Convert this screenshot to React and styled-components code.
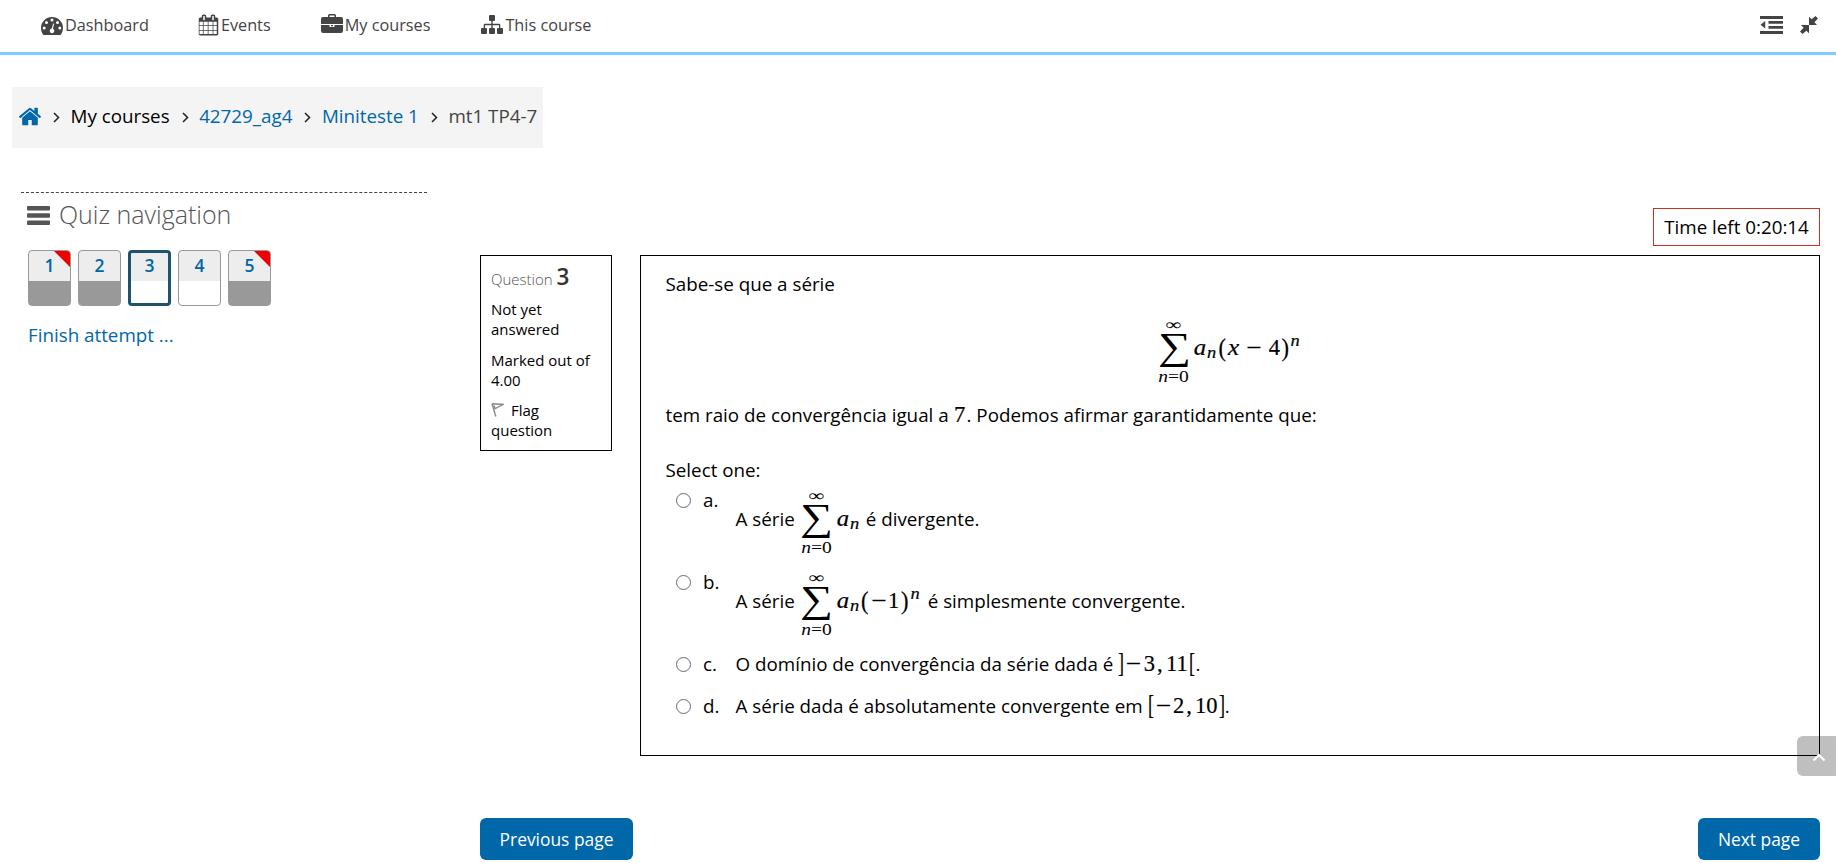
import React from 'react';
import styled, { createGlobalStyle, css } from 'styled-components';

const Global = createGlobalStyle`
  *{box-sizing:border-box}
  html,body{margin:0;height:863px;overflow:hidden;background:#fff}
  body{font-family:"Open Sans",sans-serif;font-size:18.8px;line-height:28px;color:#000}
`;
const Page = styled.div`height:863px;overflow:hidden;display:flex;flex-direction:column;`;
const Header = styled.header`
  height:55px;flex:none;border-bottom:3px solid #7bceff;display:flex;align-items:center;
  padding:0 18px 3px 41px;font-size:16.25px;color:#444;
`;
const MenuItem = styled.a`
  display:flex;align-items:center;gap:2px;margin-right:${p => p.$after || 0}px;white-space:nowrap;
  svg{margin-top:${p => p.$drop || 0}px}
`;
const Tools = styled.div`margin-left:auto;display:flex;align-items:center;gap:17px;`;
const Icon = styled.svg`display:block;flex:none;fill:currentColor;width:${p => p.$w}px;height:${p => p.$h || p.$w}px;`;
const Crumbs = styled.nav`
  margin:32px 0 0 12px;width:531px;height:61px;flex:none;background:#f4f4f4;display:flex;align-items:center;
  padding:0 6px 4px 7px;white-space:nowrap;
`;
const Crumb = styled.span`color:${p => p.$color || '#0067a9'};`;
const Home = styled(Crumb)`padding-top:2px;`;
const Sep = styled.svg`width:7px;height:11px;margin:4px 10.5px 0 12px;fill:none;stroke:#222;stroke-width:1.5;flex:none;`;
const Columns = styled.div`display:flex;align-items:flex-start;padding-right:16px;`;
const Sidebar = styled.aside`width:406px;margin:44px 53px 0 21px;flex:none;border-top:1px dashed #444;`;
const Heading = styled.h2`
  margin:0;padding:2px 0 0 6px;height:57px;display:flex;align-items:flex-start;gap:9px;font-size:25px;line-height:38px;font-weight:300;color:#555;
  svg{margin-top:11px}
`;
const QnGrid = styled.div`display:flex;gap:7px;padding-left:7px;`;
const Qn = styled.a`
  position:relative;width:43px;height:56px;overflow:hidden;border-radius:4px;text-align:center;
  font-size:17.5px;font-weight:600;line-height:${p => (p.$current ? 25 : 29)}px;color:#0067a9;
  border:${p => (p.$current ? '3px solid #1f536b' : '1px solid #999')};
  background:linear-gradient(#ededed ${p => (p.$current ? 28 : 30)}px, ${p => (p.$done ? '#999' : '#fff')} 0);
  ${p => p.$flagged && css`&::after{content:"";position:absolute;top:0;right:0;border-top:16px solid #e00;border-left:16px solid transparent;}`}
`;
const Finish = styled.a`display:block;margin:15px 0 0 7px;color:#0067a9;`;
const Main = styled.main`flex:1;display:flex;flex-direction:column;padding-top:60px;`;
const Timer = styled.div`align-self:flex-end;width:167px;height:38px;border:1px solid #ca3120;text-align:center;line-height:36px;white-space:nowrap;`;
const Question = styled.section`display:flex;align-items:flex-start;margin-top:9px;`;
const Info = styled.div`width:132px;height:196px;border:1px solid #000;margin-right:28px;padding:10px 8px 0 10px;font-size:15px;line-height:20px;`;
const No = styled.h3`margin:0 0 11px;height:22px;font-size:15px;line-height:22px;font-weight:300;color:#555;b{font-size:22.5px;font-weight:600;color:#333}`;
const InfoText = styled.p`margin:0 0 ${p => p.$after || 11}px;svg{display:inline-block;margin-right:7px;vertical-align:-1px}`;
const Content = styled.div`width:1180px;height:501px;border:1px solid #000;padding:14px 25px 0 24.5px;white-space:nowrap;`;
const P = styled.p`margin:0;height:${p => p.$h || 28}px;`;
const Formula = styled.div`height:103px;display:flex;justify-content:center;align-items:center;padding:0 2px 3px 0;`;
const Answers = styled.div`padding-left:9px;`;
const Answer = styled.label`display:flex;height:${p => p.$h}px;`;
const Radio = styled.input`appearance:none;width:15px;height:15px;margin:7px 12px 0 1.5px;border:1.5px solid #6b6b6b;border-radius:50%;background:#fff;flex:none;`;
const Letter = styled.span`width:32.5px;flex:none;`;
const Body = styled.span`display:flex;align-items:center;height:${p => p.$h || 28}px;`;
const Math_ = styled.span`
  display:inline-flex;align-items:center;font-family:"Liberation Serif",serif;font-size:22.5px;line-height:28px;
  margin:0 ${p => p.$r || 0}px 0 ${p => p.$l || 0}px;-webkit-text-stroke:.2px #000;
`;
const T = styled.span`
  display:inline-flex;justify-content:center;width:${p => p.$w}px;flex:none;
  font-style:${p => (p.$i ? 'italic' : 'normal')};font-size:${p => p.$s || 22.5}px;
  transform:translateY(${p => p.$y || 0}px) scale(${p => p.$sx || 1}, ${p => p.$sy || 1});
`;
const SumBox = styled.span`display:flex;flex-direction:column;align-items:center;width:33px;height:62px;flex:none;`;
const Limit = styled.span`
  font-size:16px;line-height:12px;height:12px;white-space:nowrap;-webkit-text-stroke:0;
  transform:translateY(${p => p.$y}px) scaleX(${p => p.$sx});
`;
const Sigma = styled.span`
  font-size:34px;line-height:28px;height:28px;margin:5px 0;transform:translateY(-1.5px) scale(1.36, 1.12);-webkit-text-stroke:0;
`;
const Foot = styled.div`display:flex;justify-content:space-between;margin-top:62px;`;
const Button = styled.button`
  width:${p => p.$w}px;height:42px;border:0;border-radius:6px;background:#0067a9;color:#fff;padding:0;
  font:17.4px "Open Sans",sans-serif;
`;
const Top = styled.button`
  position:fixed;right:-5px;top:736px;width:44px;height:40px;border:0;border-radius:6px;background:rgba(0,0,0,.25);padding:3px 0 0;
  svg{fill:none;stroke:#fff;stroke-width:2.2}
`;

const Svg = ({ w, h, box = '0 0 1792 1792', children }) => <Icon $w={w} $h={h} viewBox={box}>{children}</Icon>;
const Gt = () => <Sep viewBox="0 0 7 11"><path d="M1 1l4.500 4.500L1 10" /></Sep>;
const Sum = () => (
  <SumBox>
    <Limit $sx={1.4} $y={1.5}>∞</Limit><Sigma>∑</Sigma><Limit $sx={1.22} $y={3.5}><i>n</i>=0</Limit>
  </SumBox>
);
const An = () => <><T $i $w={12} $sx={1.1}>a</T><T $i $s={16} $w={11} $y={5} $sx={1.15}>n</T></>;
const Power = () => <T $i $s={16} $w={10} $y={-7} $sx={1.15}>n</T>;
const Paren = ({ children }) => <T $w={10} $sy={1.1}>{children}</T>;
const Minus = ({ w = 19 }) => <T $w={w} $sx={1.22}>−</T>;
const Interval = ({ open, close, from, to }) => (
  <Math_ $l={5}>
    <T $w={6} $sx={0.8} $sy={1.2}>{open}</T><Minus /><T $w={12}>{from}</T><T $w={9}>,</T><T $w={25}>{to}</T><T $w={6} $sx={0.8} $sy={1.2}>{close}</T>
  </Math_>
);

export default function App() {
  return (
    <Page>
      <Global />
      <Header>
        <MenuItem $after={49} $drop={2}>
          <Svg w={22} h={18} box="0 0 22 18"><path fillRule="evenodd" d="M11 0A11 11 0 0 0 0 11c0 2.200.600 4.300 1.800 6.300.3.500.700.700 1.200.700h16c.5 0 .9-.2 1.200-.7A12 12 0 0 0 22 11 11 11 0 0 0 11 0zM11 1.600a1.500 1.500 0 1 1 0 3 1.500 1.500 0 0 1 0-3zM5.500 3.900a1.500 1.500 0 1 1 0 3 1.500 1.500 0 0 1 0-3zM3.200 9.500a1.500 1.500 0 1 1 0 3 1.500 1.500 0 0 1 0-3zM16.500 3.900a1.500 1.500 0 1 1 0 3 1.500 1.500 0 0 1 0-3zM18.800 9.500a1.500 1.500 0 1 1 0 3 1.500 1.500 0 0 1 0-3zM12.100 6.500l1 .3-1.100 5a2.300 2.300 0 1 1-1.200-.2z" /></Svg>
          Dashboard
        </MenuItem>
        <MenuItem $after={50}>
          <Svg w={21} h={22} box="64 0 1792 1792"><path d="M192 1664h288v-288h-288v288zM544 1664h352v-288h-352v288zM192 1312h288v-352h-288v352zM544 1312h352v-352h-352v352zM192 896h288v-288h-288v288zM960 1664h352v-288h-352v288zM544 896h352v-288h-352v288zM1376 1664h288v-288h-288v288zM960 1312h352v-352h-352v352zM640 448v-288q0-13-9.500-22.500t-22.500-9.500h-64q-13 0-22.500 9.500t-9.500 22.500v288q0 13 9.500 22.500t22.500 9.500h64q13 0 22.500-9.500t9.500-22.500zM1376 1312h288v-352h-288v352zM960 896h352v-288h-352v288zM1376 896h288v-288h-288v288zM1408 448v-288q0-13-9.500-22.500t-22.500-9.500h-64q-13 0-22.500 9.500t-9.500 22.500v288q0 13 9.500 22.500t22.500 9.500h64q13 0 22.500-9.500t9.500-22.500zM1792 384v1280q0 52-38 90t-90 38h-1408q-52 0-90-38t-38-90v-1280q0-52 38-90t90-38h128v-96q0-66 47-113t113-47h64q66 0 113 47t47 113v96h384v-96q0-66 47-113t113-47h64q66 0 113 47t47 113v96h128q52 0 90 38t38 90z" /></Svg>
          Events
        </MenuItem>
        <MenuItem $after={51} $drop={-2}>
          <Svg w={22} h={19} box="0 0 22 19"><path fillRule="evenodd" d="M7 3V1.500Q7 0 8.500 0h5Q15 0 15 1.500V3h5q2 0 2 2v5H0V5q0-2 2-2zM8.500 3h5V1.500h-5zM0 11h8.500v2h5v-2H22v6q0 2-2 2H2q-2 0-2-2zM10 11h2v1.200h-2z" /></Svg>
          My courses
        </MenuItem>
        <MenuItem>
          <Svg w={22} h={19} box="0 0 22 19"><path d="M9 0h4q1 0 1 1v4q0 1-1 1h-1.300v2.800H18q1.300 0 1.300 1.300V13H21q1 0 1 1v4q0 1-1 1h-4q-1 0-1-1v-4q0-1 1-1h1v-2.800h-6.300V13H13q1 0 1 1v4q0 1-1 1H9q-1 0-1-1v-4q0-1 1-1h1.300v-2.800H4V13h1q1 0 1 1v4q0 1-1 1H1q-1 0-1-1v-4q0-1 1-1h1.700v-2.900Q2.700 8.800 4 8.800h6.300V6H9Q8 6 8 5V1q0-1 1-1z" /></Svg>
          This course
        </MenuItem>
        <Tools>
          <Svg w={23} h={18} box="0 0 23 18"><path d="M0 0h23v3H0zM8.500 5H23v2.700H8.500zM8.500 10H23v2.700H8.500zM0 15h23v3H0zM5.200 5v7.500L.5 8.700z" /></Svg>
          <Svg w={18} h={18} box="0 0 18 18"><path d="M9 .7l2.600 2.600L15.500 0 18 2.500l-3.600 3.700L17 9H9zM1 9h8v8.300l-2.600-2.600L2.500 18 0 15.500l3.600-3.700z" /></Svg>
        </Tools>
      </Header>
      <Crumbs>
        <Home><Svg w={22} h={19} box="89 248 1615 1290"><path d="M1472 992v480q0 26-19 45t-45 19h-384v-384h-256v384h-384q-26 0-45-19t-19-45v-480q0-1 .5-3t.5-3l575-474 575 474q1 2 1 6zm223-69l-62 74q-8 9-21 11h-3q-13 0-21-7l-692-577-692 577q-12 8-24 7-13-2-21-11l-62-74q-8-10-7-23.500t11-21.500l719-599q32-26 76-26t76 26l244 204v-195q0-14 9-23t23-9h192q14 0 23 9t9 23v408l219 182q10 8 11 21.500t-7 23.500z" /></Svg></Home>
        <Gt />
        <Crumb $color="#000">My courses</Crumb><Gt />
        <Crumb>42729_ag4</Crumb><Gt />
        <Crumb>Miniteste 1</Crumb><Gt />
        <Crumb $color="#444">mt1 TP4-7</Crumb>
      </Crumbs>
      <Columns>
        <Sidebar>
          <Heading>
            <Svg w={23} h={19} box="0 0 23 19"><rect width="23" height="4.500" rx="1" /><rect y="7.200" width="23" height="4.500" rx="1" /><rect y="14.500" width="23" height="4.500" rx="1" /></Svg>
            Quiz navigation
          </Heading>
          <QnGrid>
            <Qn $done $flagged>1</Qn><Qn $done>2</Qn><Qn $current>3</Qn><Qn>4</Qn><Qn $done $flagged>5</Qn>
          </QnGrid>
          <Finish>Finish attempt ...</Finish>
        </Sidebar>
        <Main>
          <Timer>Time left 0:20:14</Timer>
          <Question>
            <Info>
              <No>Question <b>3</b></No>
              <InfoText>Not yet<br />answered</InfoText>
              <InfoText $after={10}>Marked out of<br />4.00</InfoText>
              <InfoText><Icon $w={13} $h={14} viewBox="0 0 13 14"><path d="M1 .7l11 .8-8.500 4.500M1 .7L4.800 13.500M3 2.500l1.200 3" fill="none" stroke="#888" strokeWidth="1.400" /></Icon>Flag<br />question</InfoText>
            </Info>
            <Content>
              <P>Sabe-se que a série</P>
              <Formula>
                <Math_><Sum /><T $w={4} /><An /><Paren>(</Paren><T $i $w={13} $sx={1.15}>x</T><Minus w={28} /><T $w={12}>4</T><Paren>)</Paren><Power /></Math_>
              </Formula>
              <P $h={55}>tem raio de convergência igual a <Math_ $r={1}><T $w={12}>7</T></Math_>. Podemos afirmar garantidamente que:</P>
              <P $h={30}>Select one:</P>
              <Answers>
                <Answer $h={82}><Radio type="radio" name="answer" /><Letter>a.</Letter><Body $h={66}>A série<Math_ $l={5} $r={6}><Sum /><T $w={4} /><An /></Math_>é divergente.</Body></Answer>
                <Answer $h={82}><Radio type="radio" name="answer" /><Letter>b.</Letter><Body $h={66}>A série<Math_ $l={5} $r={8}><Sum /><T $w={4} /><An /><Paren>(</Paren><Minus w={18} /><T $w={12}>1</T><Paren>)</Paren><Power /></Math_>é simplesmente convergente.</Body></Answer>
                <Answer $h={42}><Radio type="radio" name="answer" /><Letter>c.</Letter><Body>O domínio de convergência da série dada é<Interval open="]" from="3" to="11" close="[" />.</Body></Answer>
                <Answer $h={42}><Radio type="radio" name="answer" /><Letter>d.</Letter><Body>A série dada é absolutamente convergente em<Interval open="[" from="2" to="10" close="]" />.</Body></Answer>
              </Answers>
            </Content>
          </Question>
          <Foot><Button $w={153}>Previous page</Button><Button $w={122}>Next page</Button></Foot>
        </Main>
      </Columns>
      <Top><svg width="14" height="9" viewBox="0 0 14 9"><path d="M1.500 7.500L7 2l5.500 5.500" /></svg></Top>
    </Page>
  );
}
